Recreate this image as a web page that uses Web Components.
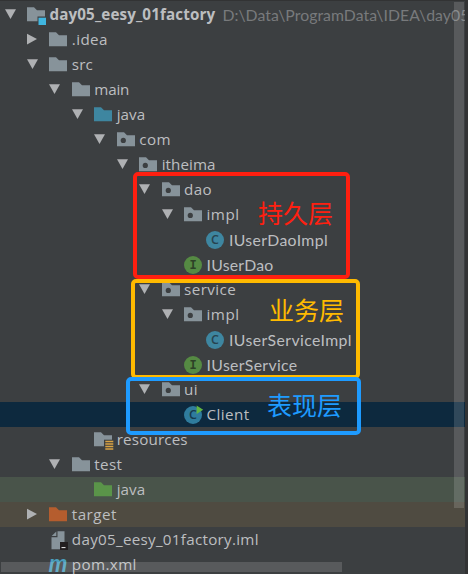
<!DOCTYPE html>
<html lang="zh-CN">
<head>
<meta charset="UTF-8">
<title>Project</title>
<style>
    body {
        margin: 0;
        background: #323334;
        overflow: hidden;
    }
</style>
</head>
<body>
<project-tree>
    <tree-row depth="0" arrow="down" icon="module" bold w="166" path="D:\Data\ProgramData\IDEA\day05">day05_eesy_01factory</tree-row>
    <tree-row depth="1" arrow="right" icon="folder" w="36">.idea</tree-row>
    <tree-row depth="1" arrow="down" icon="folder" w="21">src</tree-row>
    <tree-row depth="2" arrow="down" icon="folder" w="35">main</tree-row>
    <tree-row depth="3" arrow="down" icon="source" w="28.5">java</tree-row>
    <tree-row depth="4" arrow="down" icon="package" w="32">com</tree-row>
    <tree-row depth="5" arrow="down" icon="package" w="54">itheima</tree-row>
    <tree-row depth="6" arrow="down" icon="package" w="28">dao</tree-row>
    <tree-row depth="7" arrow="down" icon="package" w="33">impl</tree-row>
    <tree-row depth="8" icon="class" w="99" type>IUserDaoImpl</tree-row>
    <tree-row depth="7" icon="interface" w="67" type>IUserDao</tree-row>
    <tree-row depth="6" arrow="down" icon="package" w="52">service</tree-row>
    <tree-row depth="7" arrow="down" icon="package" w="33">impl</tree-row>
    <tree-row depth="8" icon="class" w="123" type>IUserServiceImpl</tree-row>
    <tree-row depth="7" icon="interface" w="91" type>IUserService</tree-row>
    <tree-row depth="6" arrow="down" icon="package" w="14">ui</tree-row>
    <tree-row depth="7" icon="main" w="43" tone="selected">Client</tree-row>
    <tree-row depth="3" icon="resources" w="71">resources</tree-row>
    <tree-row depth="2" arrow="down" icon="folder" w="28">test</tree-row>
    <tree-row depth="3" icon="test" w="28.5" tone="test">java</tree-row>
    <tree-row depth="1" arrow="right" icon="excluded" w="45" tone="excluded">target</tree-row>
    <tree-row depth="1" icon="iml" w="187">day05_eesy_01factory.iml</tree-row>
    <tree-row depth="1" icon="maven" w="65">pom.xml</tree-row>

    <layer-mark slot="marks" style="--x: 133px; --y: 172px; --w: 217px; --h: 107px; --c: #ff1f10; --tx: 121px; --ty: 21px">持久层</layer-mark>
    <layer-mark slot="marks" style="--x: 131px; --y: 279px; --w: 229px; --h: 100px; --c: #ffba00; --tx: 134px; --ty: 11px">业务层</layer-mark>
    <layer-mark slot="marks" style="--x: 126px; --y: 377px; --w: 235px; --h: 58px; --c: #1e9bff; --tx: 137px; --ty: 8px">表现层</layer-mark>
</project-tree>

<script>
const folder = (color) => `<path fill="${color}" d="M0 5.3H7L10 8.3H18V19.3H0Z"/>`;
const GREY = '#87939a';

// icons share a 20x25 box, as tall as a row
const icons = {
    folder: folder(GREY),
    source: folder('#3e86a0'),
    test: folder('#5a9449'),
    excluded: folder('#b55d2e'),
    package: folder(GREY) + '<circle cx="6.3" cy="13.4" r="2.6" fill="#3c3f41"/>',
    module: folder(GREY) + `
        <rect x="10.5" y="14.5" width="8" height="8" fill="#3c3f41"/>
        <rect x="11.5" y="15.7" width="7.5" height="7.3" fill="#40b6e0"/>`,
    resources: folder(GREY) + `
        <rect x="10" y="12.7" width="9" height="10" fill="#3c3f41"/>
        <path stroke="#d9a343" stroke-width="1.5" d="M11.3 14.5h8M11.3 17h8M11.3 19.5h8M11.3 22h8"/>`,
    class: `
        <circle cx="9" cy="13" r="9" fill="#3e86a0"/>
        <text x="9" y="17.4" text-anchor="middle" font-size="12.5" font-weight="600" fill="#27434f">C</text>`,
    interface: `
        <circle cx="9" cy="13" r="9" fill="#558a43"/>
        <text x="9" y="17" text-anchor="middle" font-size="12" font-weight="bold" font-family="Liberation Mono" fill="#2d4227">I</text>`,
    main: `
        <circle cx="9" cy="13" r="9" fill="#2f7c9d"/>
        <text x="9" y="17.4" text-anchor="middle" font-size="12.5" font-weight="600" fill="#173a4d">C</text>
        <path fill="#0d293e" d="M12 3V5.5L15 4Z"/>
        <path fill="#62b543" d="M12.6 3.4V12L19.2 7.7Z"/>`,
    iml: `
        <path fill="${GREY}" d="M8.5 4.2H15.5V22.3H2.5V10.2H8.5Z"/>
        <path fill="${GREY}" d="M7.3 4.4V9H2.7Z"/>
        <rect x="11" y="15" width="8" height="8" fill="#231f20"/>
        <rect x="12.5" y="20" width="4" height="1.1" fill="#d8d8d8"/>`,
    maven: `<text x="-.5" y="19.5" font-size="24" font-weight="bold" font-style="italic"
        font-family="Liberation Sans" textLength="18.8" lengthAdjust="spacingAndGlyphs" fill="#4b9fbd">m</text>`
};

const arrows = {
    down: '<path fill="#afb1b3" d="M0 7.3H11L5.5 17Z"/>',
    right: '<path fill="#afb1b3" d="M0 6.7L10 12L0 17.5Z"/>'
};

class ProjectTree extends HTMLElement {
    constructor() {
        super();
        this.attachShadow({ mode: 'open' });
    }

    connectedCallback() {
        this.shadowRoot.innerHTML = `
            <style>
                :host {
                    display: block;
                    position: relative;
                    box-sizing: border-box;
                    width: 468px;
                    height: 574px;
                    padding: 2px 3px 0 0;
                    overflow: hidden;
                    background: linear-gradient(#323334, #323334) 465px 0 no-repeat,
                                linear-gradient(#323334, #323334) 0 0 / 100% 1px no-repeat,
                                #3c3f41;
                    font-family: "Open Sans", "Noto Sans", sans-serif;
                    font-size: 15.2px;
                    color: #bcbec0;
                }

                .rows {
                    display: flex;
                    flex-direction: column;
                    height: 572px;
                    overflow: hidden;
                }

                .bar {
                    position: absolute;
                    background: rgba(255, 255, 255, 0.145);
                }

                .bar.v {
                    left: 454px;
                    top: 2px;
                    width: 10px;
                    height: 506px;
                }

                .bar.h {
                    left: 1px;
                    top: 562px;
                    width: 341px;
                    height: 10px;
                }
            </style>

            <div class="rows"><slot></slot></div>
            <div class="bar v"></div>
            <div class="bar h"></div>
            <slot name="marks"></slot>
        `;
    }
}

class TreeRow extends HTMLElement {
    constructor() {
        super();
        this.attachShadow({ mode: 'open' });
    }

    get indent() {
        return 4.5 + Number(this.getAttribute('depth')) * 22.45;
    }

    get path() {
        return this.getAttribute('path');
    }

    connectedCallback() {
        this.shadowRoot.innerHTML = `
            <style>
                :host {
                    display: flex;
                    flex: none;
                    box-sizing: border-box;
                    height: 25px;
                    line-height: 25px;
                    padding-left: ${this.indent}px;
                    white-space: pre;
                    overflow: hidden;
                }

                :host([bold]) .label {
                    font-weight: bold;
                }

                :host([tone="selected"]) {
                    background: #0d293e;
                }

                :host([tone="test"]) {
                    background: #49544a;
                }

                :host([tone="excluded"]) {
                    background: #4f4b41;
                }

                svg {
                    flex: none;
                    height: 25px;
                    overflow: visible;
                }

                .arrow {
                    width: 22.4px;
                }

                .icon {
                    width: 22.5px;
                }

                .label, .path {
                    flex: none;
                }

                /* a plain capital I, without bars */
                :host([type]) .label, .path {
                    font-family: Lato, sans-serif;
                    font-size: 15.8px;
                }

                .path {
                    margin-left: 7px;
                    color: #787a7c;
                }
            </style>

            <svg class="arrow">${arrows[this.getAttribute('arrow')] || ''}</svg>
            <svg class="icon">${icons[this.getAttribute('icon')]}</svg>
            <span class="label"><slot></slot></span>
            ${this.path ? `<span class="path">${this.path}</span>` : ''}
        `;
        this.fit(this.shadowRoot.querySelector('.label'), Number(this.getAttribute('w')), this.textContent.length);
        if (this.path) {
            this.fit(this.shadowRoot.querySelector('.path'), 247, this.path.length);
        }
    }

    // tracks the text so that it takes the given width
    fit(el, width, count) {
        const natural = el.getBoundingClientRect().width;
        el.style.letterSpacing = (width - natural) / count + 'px';
    }
}

class LayerMark extends HTMLElement {
    constructor() {
        super();
        this.attachShadow({ mode: 'open' });
    }

    connectedCallback() {
        this.shadowRoot.innerHTML = `
            <style>
                :host {
                    position: absolute;
                    left: var(--x);
                    top: var(--y);
                    width: var(--w);
                    height: var(--h);
                    box-sizing: border-box;
                    display: block;
                    border: 4px solid var(--c);
                    border-radius: 5px;
                    padding: var(--ty) 0 0 var(--tx);
                    color: var(--c);
                    font: 25px/30px "Noto Sans CJK SC", sans-serif;
                    white-space: nowrap;
                }
            </style>
            <slot></slot>
        `;
    }
}

customElements.define('project-tree', ProjectTree);
customElements.define('tree-row', TreeRow);
customElements.define('layer-mark', LayerMark);
</script>
</body>
</html>
